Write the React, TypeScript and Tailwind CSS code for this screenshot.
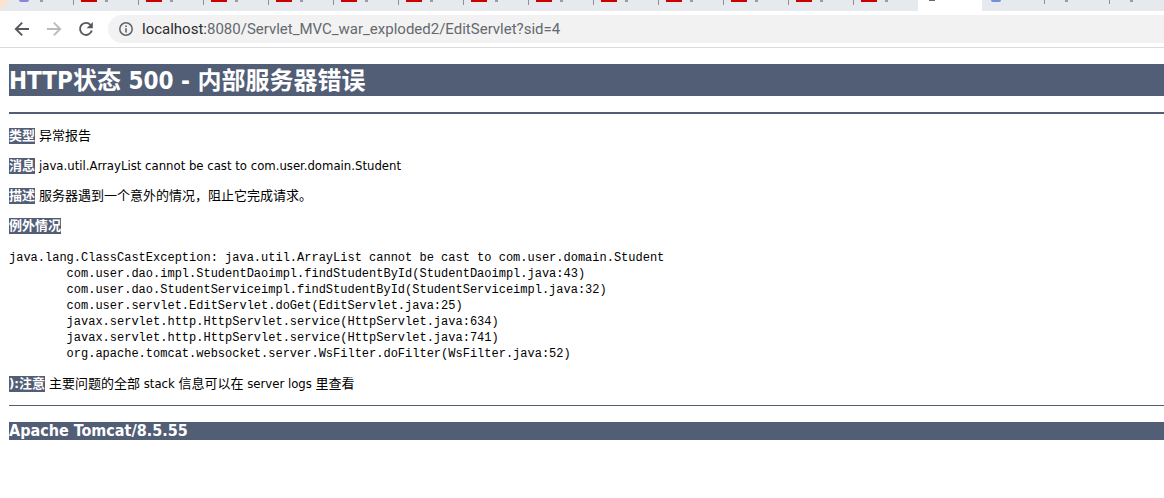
import type { ReactNode } from "react";

const articleTabs = Array.from({ length: 13 }, (_, i) => i);

const stackTrace = [
  "java.lang.ClassCastException: java.util.ArrayList cannot be cast to com.user.domain.Student",
  "\tcom.user.dao.impl.StudentDaoimpl.findStudentById(StudentDaoimpl.java:43)",
  "\tcom.user.dao.StudentServiceimpl.findStudentById(StudentServiceimpl.java:32)",
  "\tcom.user.servlet.EditServlet.doGet(EditServlet.java:25)",
  "\tjavax.servlet.http.HttpServlet.service(HttpServlet.java:634)",
  "\tjavax.servlet.http.HttpServlet.service(HttpServlet.java:741)",
  "\torg.apache.tomcat.websocket.server.WsFilter.doFilter(WsFilter.java:52)",
].join("\n");

function Icon({ children }: { children: ReactNode }) {
  return (
    <svg
      viewBox="0 0 16 16"
      className="size-4"
      fill="none"
      stroke="currentColor"
      strokeWidth="1.9"
      aria-hidden="true"
    >
      {children}
    </svg>
  );
}

function TitleMark() {
  return <span className="ml-2 h-[2px] w-[3px] bg-[#9a9da3]" />;
}

function TabStrip() {
  return (
    <div className="flex h-[11px] items-start overflow-hidden bg-[#e6e9ed]">
      <div className="flex w-[73px] shrink-0">
        <span className="h-[9px] w-2 rounded-br-full bg-[#fbe3d3]" />
        <span className="ml-[11px] h-[2px] w-[10px] rounded-b-full bg-[#8686dc]" />
        <span className="ml-[11px] h-[2px] w-[3px] bg-[#9a9da3]" />
      </div>
      {articleTabs.map((tab) => (
        <div key={tab} className="flex w-[65px] shrink-0 items-start">
          <span className="h-[5px] w-px bg-[#8b9096]" />
          <span className="ml-[7px] h-[2px] w-4 bg-[#c80000]" />
          <TitleMark />
        </div>
      ))}
      <div className="flex h-full w-16 shrink-0 items-start bg-white">
        <span className="ml-[11px] h-px w-[6px] bg-[#66696d]" />
      </div>
      <div className="flex w-[62px] shrink-0 items-start">
        <span className="ml-[9px] h-[2px] w-[10px] rounded-b-full bg-[#6f91d8]" />
      </div>
      <div className="flex w-[65px] shrink-0 items-start">
        <span className="h-[4px] w-px bg-[#8b9096]" />
        <span className="ml-5 h-[2px] w-[3px] bg-[#9a9da3]" />
      </div>
      <div className="flex flex-1 items-start">
        <span className="h-[4px] w-px bg-[#8b9096]" />
        <span className="ml-5 h-[2px] w-[3px] bg-[#9a9da3]" />
      </div>
    </div>
  );
}

function Toolbar() {
  return (
    <div className="flex h-[37px] items-center border-b border-[#dadbdc] bg-white pl-[14px]">
      <div className="flex items-center gap-4 text-[#55585c]">
        <button type="button" aria-label="Back">
          <Icon>
            <path d="M15 8H2.2M8.2 1.6 1.8 8l6.4 6.4" />
          </Icon>
        </button>
        <button type="button" aria-label="Forward" className="text-[#b9bbbe]">
          <Icon>
            <path d="M1 8h12.8M7.8 1.6 14.2 8l-6.4 6.4" />
          </Icon>
        </button>
        <button type="button" aria-label="Reload">
          <Icon>
            <path d="M12.6 4A6 6 0 1 0 13.8 9.6" />
            <path d="M14.8 1v6.2H8.6z" fill="currentColor" stroke="none" />
          </Icon>
        </button>
      </div>
      <div className="ml-[14px] flex h-7 flex-1 items-center gap-2 rounded-l-full bg-[#f2f2f3] pl-[10px]">
        <button type="button" aria-label="Site information" className="text-[#5f6368]">
          <Icon>
            <circle cx="8" cy="8" r="6.2" strokeWidth="1.5" />
            <path d="M8 7.2v4.2M8 4.4v1.6" strokeWidth="1.6" />
          </Icon>
        </button>
        <p className="font-['Roboto',sans-serif] text-[15px] leading-5 whitespace-nowrap text-[#65696e]">
          <span className="text-[#2a2c2f]">localhost:</span>8080/Servlet_MVC_war_exploded2/EditServlet?sid=4
        </p>
      </div>
    </div>
  );
}

function Entry({ label, children }: { label: string; children?: string }) {
  return (
    <p className="flex gap-1">
      <b className="bg-[#525d76] text-white">{label}</b>
      {children && <span>{children}</span>}
    </p>
  );
}

export default function App() {
  return (
    <div className="min-h-screen bg-white">
      <header>
        <TabStrip />
        <Toolbar />
      </header>
      <main className="pt-4 pl-[9px] font-['DejaVu_Sans_Condensed','Noto_Sans_CJK_SC',sans-serif] text-[13px] leading-4 text-black">
        <h1 className="bg-[#525d76] pt-[2px] text-2xl leading-[30px] font-bold text-white">
          HTTP状态 500 - 内部服务器错误
        </h1>
        <hr className="mt-4 mb-[14px] border-0 border-t-2 border-[#525d76]" />
        <div className="flex flex-col gap-[14px]">
          <Entry label="类型">异常报告</Entry>
          <Entry label="消息">java.util.ArrayList cannot be cast to com.user.domain.Student</Entry>
          <Entry label="描述">服务器遇到一个意外的情况，阻止它完成请求。</Entry>
          <Entry label="例外情况" />
        </div>
        <pre className="mt-4 mb-[14px] font-['Liberation_Mono',monospace] text-xs leading-4 [tab-size:8]">
          {stackTrace}
        </pre>
        <Entry label="):注意">主要问题的全部 stack 信息可以在 server logs 里查看</Entry>
        <hr className="mt-[13px] mb-4 border-0 border-t border-[#525d76]" />
        <h3 className="bg-[#525d76] text-base leading-[18px] font-bold text-white">Apache Tomcat/8.5.55</h3>
      </main>
    </div>
  );
}
